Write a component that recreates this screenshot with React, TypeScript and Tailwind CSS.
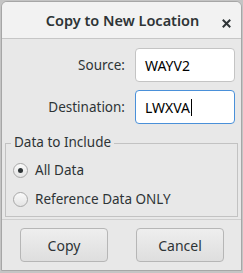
import React from "react";

export default function App() {
  const font = { fontFamily: '"Noto Sans", "Open Sans", sans-serif' };
  return (
    <div className="w-[243px] h-[273px] bg-[#c4c4c4] overflow-hidden" style={font}>
      <div className="ml-px mt-px w-[241px] h-[270px] flex flex-col border border-[#a6a6a6] rounded-t-[6px] overflow-hidden bg-[#e8e8e8]">
        {/* Header */}
        <div className="h-[37px] shrink-0 bg-[#f2f2f2] border-b border-[#c6c6c6] relative flex items-center justify-center">
          <span className="text-[14.5px] font-semibold text-[#2e3436] pl-[2px] pt-[2px]">Copy to New Location</span>
          <svg className="absolute left-[220px] top-[17px]" width="9" height="9" viewBox="0 0 9 9">
            <path d="M1.5 1.5 L7.5 7.5 M7.5 1.5 L1.5 7.5" stroke="#2e3436" strokeWidth="2" strokeLinecap="square" />
          </svg>
        </div>
        {/* Fields */}
        <div className="flex flex-col gap-[8px] pt-[9px] pr-[6px]">
          <div className="flex items-center justify-end gap-[10px]">
            <span className="text-[13.5px] text-[#2e3436]">Source:</span>
            <div className="w-[100px] h-[34px] bg-white border border-[#c4c4c4] rounded-[4px] flex items-center pl-[9px] text-[14px] text-black">
              WAYV2
            </div>
          </div>
          <div className="flex items-center justify-end gap-[10px]">
            <span className="text-[13.5px] text-[#2e3436]">Destination:</span>
            <div className="w-[100px] h-[34px] bg-white border border-[#4a90d9] rounded-[4px] flex items-center pl-[9px] text-[14px] text-black">
              LWXVA<span className="w-px h-[17px] bg-black ml-px" />
            </div>
          </div>
        </div>
        {/* Frame */}
        <div className="mt-[19px] mx-[3px] h-[74px] border border-[#c2c2c2] border-t-0 relative flex flex-col">
          <div className="flex items-center h-0">
            <div className="w-[5px] border-t border-[#c2c2c2]" />
            <span className="px-[3px] text-[13.5px] text-[#2e3436] leading-none -mt-[1px]">Data to Include</span>
            <div className="flex-1 border-t border-[#c2c2c2]" />
          </div>
          <div className="flex flex-col pl-[7px] pt-[17px] gap-[9px]">
            <div className="flex items-center gap-[7px]">
              <div className="w-[15px] h-[15px] rounded-full border border-[#a8a8a8] bg-gradient-to-b from-[#fafafa] to-[#e4e4e4] flex items-center justify-center">
                <div className="w-[5px] h-[5px] rounded-full bg-[#2e3436]" />
              </div>
              <span className="text-[13.5px] text-[#2e3436]">All Data</span>
            </div>
            <div className="flex items-center gap-[7px]">
              <div className="w-[15px] h-[15px] rounded-full border border-[#a8a8a8] bg-gradient-to-b from-[#fafafa] to-[#e4e4e4]" />
              <span className="text-[13.5px] text-[#2e3436]">Reference Data ONLY</span>
            </div>
          </div>
        </div>
        <div className="mt-[2px] h-px bg-[#cfcfcf]" />
        {/* Buttons */}
        <div className="flex pt-[8px] pl-[18px] gap-[28px]">
          <button className="w-[88px] h-[34px] rounded-[4px] border border-[#b6b6b6] bg-gradient-to-b from-[#eeeeee] to-[#dedede] text-[14px] text-[#2e3436]">Copy</button>
          <button className="w-[88px] h-[34px] rounded-[4px] border border-[#b6b6b6] bg-gradient-to-b from-[#eeeeee] to-[#dedede] text-[14px] text-[#2e3436]">Cancel</button>
        </div>
      </div>
    </div>
  );
}
